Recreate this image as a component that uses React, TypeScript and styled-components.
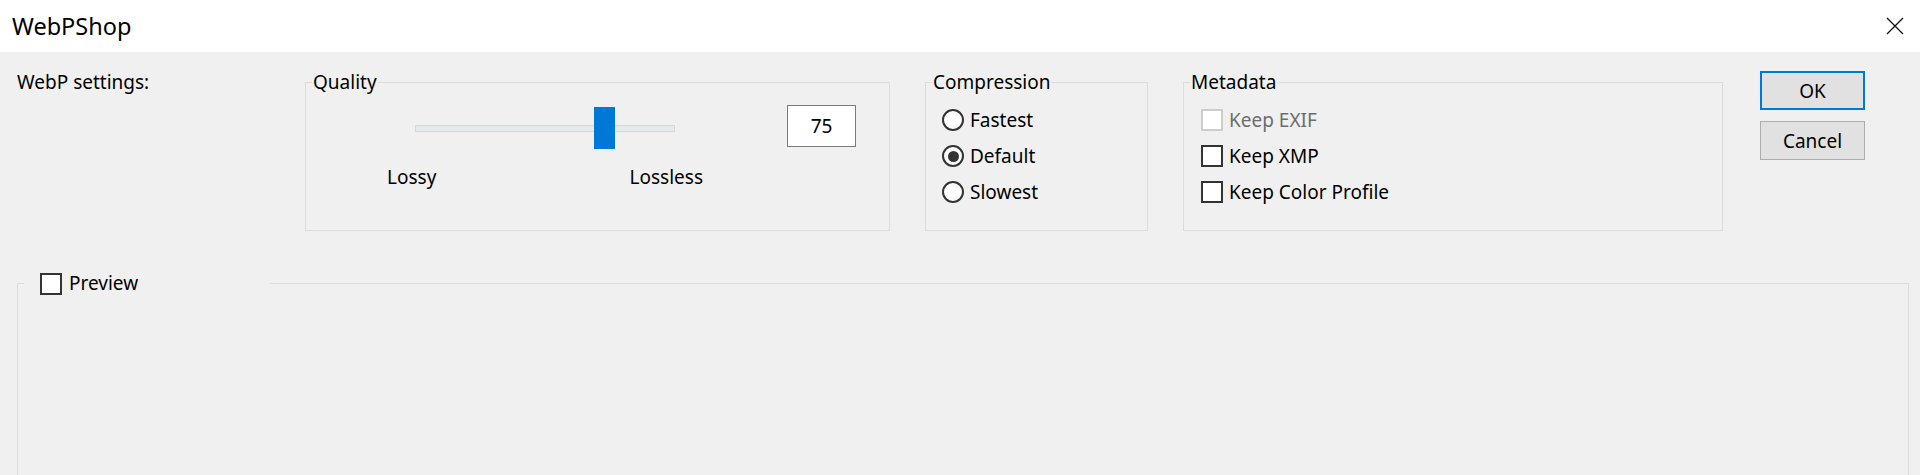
import React, { useState } from "react";
import styled, { createGlobalStyle } from "styled-components";

const GlobalStyle = createGlobalStyle`
  html, body {
    margin: 0;
    padding: 0;
    background: #f0f0f0;
    overflow: hidden;
  }
`;

// Window frame
const Window = styled.div`
  width: 1920px;
  height: 475px;
  overflow: hidden;
  display: flex;
  flex-direction: column;
  background: #f0f0f0;
  font-family: "Noto Sans", "Open Sans", sans-serif;
  font-size: 19px;
  color: #000;
`;

const TitleBar = styled.div`
  height: 52px;
  flex-shrink: 0;
  display: flex;
  align-items: center;
  justify-content: space-between;
  padding: 0 16px 0 12px;
  background: #fff;
`;

const Title = styled.div`
  font-size: 23.5px;
`;

const CloseButton = styled.button`
  width: 18px;
  height: 18px;
  padding: 0;
  border: none;
  background: transparent;
  display: flex;
`;

const Body = styled.div`
  display: flex;
  flex-direction: column;
  padding: 18px 11px 0 17px;
`;

const TopRow = styled.div`
  display: flex;
  align-items: flex-start;
  gap: 35px;
`;

const SettingsLabel = styled.div`
  width: 253px;
  line-height: 25px;
`;

// Group boxes
const GroupBox = styled.fieldset<{ $width: number }>`
  width: ${(p) => p.$width}px;
  height: 161px;
  box-sizing: border-box;
  margin: 0;
  padding: 0;
  min-width: 0;
  border: 1px solid #dcdcdc;
`;

const Legend = styled.legend`
  margin-left: 6px;
  padding: 0 1px;
  line-height: 25px;
`;

const QualityBody = styled.div`
  display: flex;
  align-items: flex-start;
  padding: 10px 0 0 81px;
`;

const SliderColumn = styled.div`
  width: 316px;
  margin-top: 2px;
`;

const TrackRow = styled.div`
  height: 42px;
  display: flex;
  align-items: center;
  padding: 0 28px;
`;

const Track = styled.div`
  position: relative;
  flex: 1;
  height: 7px;
  box-sizing: border-box;
  background: #e7eaea;
  border: 1px solid #d6d6d6;
`;

const Thumb = styled.div`
  position: absolute;
  top: 50%;
  width: 21px;
  height: 42px;
  transform: translateY(-50%);
  background: #0078d7;
`;

const ScaleLabels = styled.div`
  display: flex;
  justify-content: space-between;
  margin-top: 16px;
  line-height: 25px;
`;

const ValueBox = styled.div`
  width: 69px;
  height: 42px;
  margin-left: 84px;
  box-sizing: border-box;
  background: #fff;
  border: 1px solid #7a7a7a;
  text-align: center;
  line-height: 40px;
`;

const OptionList = styled.div<{ $inset: number }>`
  display: flex;
  flex-direction: column;
  padding: 7px 0 0 ${(p) => p.$inset}px;
`;

const OptionRow = styled.label<{ $disabled?: boolean }>`
  height: 36px;
  display: flex;
  align-items: center;
  gap: 6px;
  color: ${(p) => (p.$disabled ? "#6d6d6d" : "#000")};
`;

const RadioCircle = styled.span<{ $checked?: boolean }>`
  width: 22px;
  height: 22px;
  box-sizing: border-box;
  border: 2px solid #333;
  border-radius: 50%;
  background: #fff;
  display: flex;
  align-items: center;
  justify-content: center;

  &::after {
    content: "";
    width: 11px;
    height: 11px;
    border-radius: 50%;
    background: ${(p) => (p.$checked ? "#333" : "transparent")};
  }
`;

const CheckBox = styled.span<{ $disabled?: boolean }>`
  width: 22px;
  height: 22px;
  flex-shrink: 0;
  box-sizing: border-box;
  background: #fff;
  border: 2px solid ${(p) => (p.$disabled ? "#cccccc" : "#333")};
`;

// Buttons
const ButtonColumn = styled.div`
  display: flex;
  flex-direction: column;
  gap: 11px;
  margin: 1px 0 0 2px;
`;

const DialogButton = styled.button<{ $primary?: boolean }>`
  width: 105px;
  height: 39px;
  box-sizing: border-box;
  padding: 0;
  font-family: inherit;
  font-size: 19px;
  color: #000;
  background: #e1e1e1;
  border: ${(p) => (p.$primary ? "2px solid #0078d7" : "1px solid #adadad")};
`;

// Preview
const PreviewBox = styled.fieldset`
  height: 300px;
  margin: 40px 0 0 0;
  padding: 0;
  min-width: 0;
  border: 1px solid #dcdcdc;
`;

const PreviewLegend = styled.legend`
  width: 246px;
  box-sizing: border-box;
  margin-left: 6px;
  padding: 0 0 0 16px;
  line-height: 25px;
`;

const PreviewToggle = styled.label`
  display: inline-flex;
  align-items: center;
  gap: 7px;
  vertical-align: top;
  height: 25px;
`;

const CloseIcon = () => (
  <svg width="18" height="18" viewBox="0 0 18 18">
    <path d="M1 1 L17 17 M17 1 L1 17" stroke="#111" strokeWidth="1.3" fill="none" />
  </svg>
);

const compressionOptions = ["Fastest", "Default", "Slowest"];

const metadataOptions = [
  { label: "Keep EXIF", disabled: true },
  { label: "Keep XMP", disabled: false },
  { label: "Keep Color Profile", disabled: false },
];

export default function App() {
  const [quality] = useState(75);
  const [compression] = useState("Default");

  return (
    <>
      <GlobalStyle />
      <Window>
        <TitleBar>
          <Title>WebPShop</Title>
          <CloseButton aria-label="Close">
            <CloseIcon />
          </CloseButton>
        </TitleBar>

        <Body>
          <TopRow>
            <SettingsLabel>WebP settings:</SettingsLabel>

            <GroupBox $width={585}>
              <Legend>Quality</Legend>
              <QualityBody>
                <SliderColumn>
                  <TrackRow>
                    <Track>
                      <Thumb
                        style={{ left: `calc(${quality}% - ${(quality * 21) / 100}px)` }}
                      />
                    </Track>
                  </TrackRow>
                  <ScaleLabels>
                    <span>Lossy</span>
                    <span>Lossless</span>
                  </ScaleLabels>
                </SliderColumn>
                <ValueBox>{quality}</ValueBox>
              </QualityBody>
            </GroupBox>

            <GroupBox $width={223}>
              <Legend>Compression</Legend>
              <OptionList $inset={16}>
                {compressionOptions.map((opt) => (
                  <OptionRow key={opt}>
                    <RadioCircle $checked={opt === compression} />
                    {opt}
                  </OptionRow>
                ))}
              </OptionList>
            </GroupBox>

            <GroupBox $width={540}>
              <Legend>Metadata</Legend>
              <OptionList $inset={17}>
                {metadataOptions.map((opt) => (
                  <OptionRow key={opt.label} $disabled={opt.disabled}>
                    <CheckBox $disabled={opt.disabled} />
                    {opt.label}
                  </OptionRow>
                ))}
              </OptionList>
            </GroupBox>

            <ButtonColumn>
              <DialogButton $primary>OK</DialogButton>
              <DialogButton>Cancel</DialogButton>
            </ButtonColumn>
          </TopRow>

          <PreviewBox>
            <PreviewLegend>
              <PreviewToggle>
                <CheckBox />
                Preview
              </PreviewToggle>
            </PreviewLegend>
          </PreviewBox>
        </Body>
      </Window>
    </>
  );
}
